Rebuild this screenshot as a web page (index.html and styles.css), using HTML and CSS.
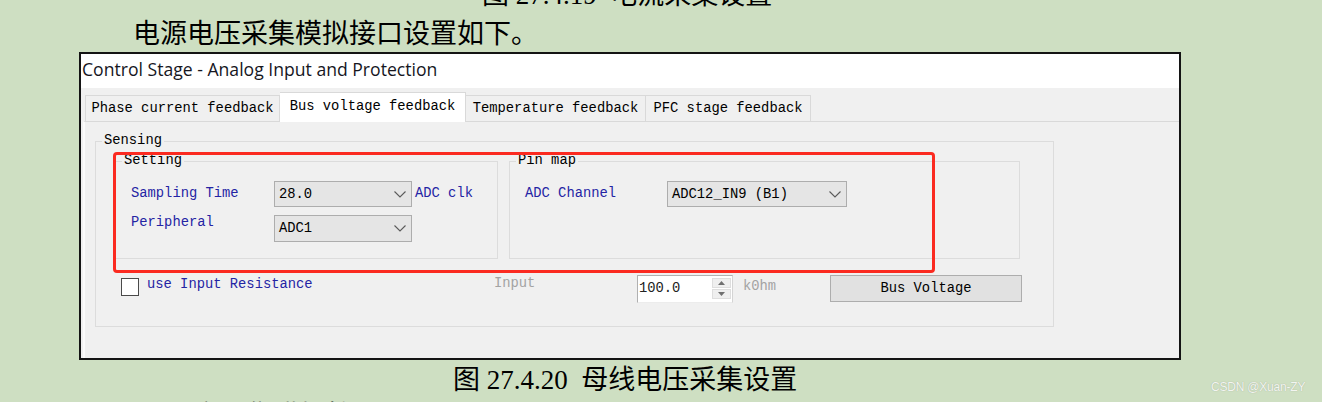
FILE: index.html
```html
<!DOCTYPE html>
<html lang="zh">
<head>
<meta charset="utf-8">
<title>Control Stage - Analog Input and Protection</title>
<link rel="stylesheet" href="styles.css">
</head>
<body>
<div class="prev"><div class="prev-text">图 27.4.19&nbsp;&nbsp;电流采集设置</div></div>
<p class="intro">电源电压采集模拟接口设置如下。</p>
<div class="window">
  <div class="titlebar">Control Stage - Analog Input and Protection</div>
  <div class="tabstrip">
    <div class="tab t-phase">Phase current feedback</div>
    <div class="tab t-bus active">Bus voltage feedback</div>
    <div class="tab t-temp">Temperature feedback</div>
    <div class="tab t-pfc">PFC stage feedback</div>
  </div>
  <div class="panel">
    <fieldset class="group sensing">
      <legend>Sensing</legend>
      <div class="group-row">
        <fieldset class="group setting">
          <legend>Setting</legend>
          <div class="form setting-form">
            <span class="lbl">Sampling Time</span>
            <div class="combo"><span>28.0</span><svg class="chev" width="12" height="7" viewBox="0 0 12 7"><polyline points="0.5,0.5 6,6 11.5,0.5"/></svg></div>
            <span class="lbl unit-blue">ADC clk</span>
            <span class="lbl lbl-top">Peripheral</span>
            <div class="combo"><span>ADC1</span><svg class="chev" width="12" height="7" viewBox="0 0 12 7"><polyline points="0.5,0.5 6,6 11.5,0.5"/></svg></div>
          </div>
        </fieldset>
        <fieldset class="group pinmap">
          <legend>Pin map</legend>
          <div class="form pin-form">
            <span class="lbl">ADC Channel</span>
            <div class="combo"><span>ADC12_IN9 (B1)</span><svg class="chev" width="12" height="7" viewBox="0 0 12 7"><polyline points="0.5,0.5 6,6 11.5,0.5"/></svg></div>
          </div>
        </fieldset>
      </div>
      <div class="opt-row">
        <div class="cb"></div>
        <span class="lbl cb-text">use Input Resistance</span>
        <span class="dim input-lbl">Input</span>
        <div class="spin">
          <span class="spin-val">100.0</span>
          <div class="spin-btns">
            <div class="spin-btn"><svg width="7" height="4" viewBox="0 0 7 4"><polygon points="0,4 3.5,0 7,4"/></svg></div>
            <div class="spin-btn"><svg width="7" height="4" viewBox="0 0 7 4"><polygon points="0,0 3.5,4 7,0"/></svg></div>
          </div>
        </div>
        <span class="dim unit">k0hm</span>
        <div class="btn">Bus Voltage</div>
      </div>
    </fieldset>
  </div>
  <div class="annotation"></div>
</div>
<div class="caption">图 27.4.20&nbsp;&nbsp;母线电压采集设置</div>
<div class="next">温度采集模拟接口设置</div>
<div class="watermark">CSDN @Xuan-ZY</div>
</body>
</html>
```
FILE: styles.css
```css
html, body {
  margin: 0;
  padding: 0;
}
body {
  background: #cedfc2;
  width: 1322px;
  height: 402px;
  overflow: hidden;
  position: relative;
  font-family: "Liberation Serif", "Noto Sans CJK SC", serif;
  color: #000;
}
.prev {
  height: 8px;
  overflow: hidden;
}
.prev-text {
  margin-top: -18px;
  padding-left: 482px;
  font-size: 27px;
  line-height: 27px;
}
.intro {
  margin: 0;
  height: 44px;
  box-sizing: border-box;
  padding: 8px 0 0 133px;
  font-size: 27px;
  line-height: 36px;
}
.window {
  position: relative;
  margin-left: 79px;
  width: 1102px;
  height: 308px;
  box-sizing: border-box;
  border: 2px solid #141414;
  background: #f0f0f0;
  display: flex;
  flex-direction: column;
}
.titlebar {
  height: 34px;
  background: #fff;
  padding-left: 1px;
  font-family: "Open Sans", "Liberation Sans", sans-serif;
  font-size: 17.6px;
  line-height: 30px;
  color: #16161e;
}
.tabstrip {
  height: 33px;
  display: flex;
  align-items: flex-end;
  padding-left: 4px;
  font-family: "Liberation Mono", monospace;
  font-size: 13.8px;
}
.tab {
  box-sizing: border-box;
  height: 26px;
  line-height: 25px;
  border: 1px solid #d9d9d9;
  border-bottom: 0;
  text-align: center;
  background: #f0f0f0;
  white-space: nowrap;
}
.t-phase { width: 195px; }
.t-bus { width: 186px; }
.t-temp { width: 180px; border-left: 0; }
.t-pfc { width: 165px; border-left: 0; }
.tab.active {
  position: relative;
  z-index: 2;
  height: 30px;
  line-height: 27px;
  margin-bottom: -1px;
  background: #fff;
  border-left: 0;
}
.panel {
  flex: 1;
  margin-left: 2px;
  border-top: 1px solid #d9d9d9;
  border-left: 2px solid #fbfbfb;
  font-family: "Liberation Mono", monospace;
  font-size: 13.8px;
}
.group {
  margin: 0;
  padding: 0;
  min-width: 0;
  border: 1px solid #dcdcdc;
}
.group > legend {
  margin-left: 6px;
  padding: 0 2px;
  line-height: 16px;
  color: #000;
}
.sensing {
  margin: 11px 0 0 10px;
  width: 959px;
  box-sizing: border-box;
  padding-bottom: 23px;
}
.group-row {
  display: flex;
  margin: 4px 0 0 19px;
  gap: 11px;
}
.setting {
  width: 383px;
  box-sizing: border-box;
}
.pinmap {
  width: 511px;
  box-sizing: border-box;
}
.form {
  display: grid;
  padding: 12px 0 16px 15px;
  row-gap: 8px;
}
.setting-form {
  grid-template-columns: 143px 138px auto;
  grid-template-rows: 26px 27px;
}
.pin-form {
  grid-template-columns: 142px 180px;
  grid-template-rows: 26px;
}
.lbl {
  color: #2424a4;
  line-height: 16px;
  align-self: center;
  white-space: nowrap;
}
.lbl.lbl-top {
  align-self: start;
  margin-top: 0;
}
.unit-blue {
  margin-left: 3px;
  align-self: center;
}
.combo {
  box-sizing: border-box;
  display: flex;
  align-items: center;
  justify-content: space-between;
  border: 1px solid #adadad;
  background: #e5e5e5;
  padding: 0 5px 0 4px;
  white-space: nowrap;
  color: #000;
}
.chev polyline {
  fill: none;
  stroke: #5a5a5a;
  stroke-width: 1.1;
}
.opt-row {
  display: flex;
  align-items: flex-start;
  margin-top: 16px;
  height: 28px;
}
.cb {
  box-sizing: border-box;
  width: 18px;
  height: 18px;
  margin: 3px 0 0 25px;
  border: 1.5px solid #4a4a4a;
  background: #fff;
}
.cb-text {
  margin: 2px 0 0 8px;
  width: 347px;
  line-height: 16px;
  align-self: flex-start;
}
.dim {
  color: #a3a3a3;
  line-height: 16px;
  white-space: nowrap;
}
.input-lbl {
  width: 143px;
  margin-top: 1px;
}
.spin {
  box-sizing: border-box;
  width: 96px;
  height: 28px;
  display: flex;
  background: #fff;
  border: 1px solid #b0b0b0;
  border-right-color: #d4d4d4;
  border-bottom-color: #ececec;
}
.spin-val {
  flex: 1;
  padding: 5px 0 0 1px;
  line-height: 16px;
  color: #222;
}
.spin-btns {
  width: 19px;
  margin: 2px 1px 3px 0;
  display: flex;
  flex-direction: column;
  gap: 1px;
}
.spin-btn {
  flex: 1;
  display: flex;
  align-items: center;
  justify-content: center;
  background: #efefef;
  border: 1px solid #dedede;
}
.spin-btn polygon {
  fill: #707070;
}
.unit {
  width: 87px;
  margin: 4px 0 0 10px;
}
.btn {
  box-sizing: border-box;
  width: 192px;
  height: 27px;
  line-height: 25px;
  text-align: center;
  background: #e1e1e1;
  border: 1px solid #adadad;
  color: #000;
}
.annotation {
  position: absolute;
  left: 32px;
  top: 98px;
  width: 822px;
  height: 121px;
  box-sizing: border-box;
  border: 3px solid #fb2a20;
  border-radius: 4px;
  pointer-events: none;
}
.caption {
  height: 40px;
  padding-left: 453px;
  font-size: 27px;
  line-height: 40px;
  white-space: nowrap;
}
.next {
  margin-top: 3px;
  padding-left: 165px;
  font-size: 27px;
  line-height: 27px;
  white-space: nowrap;
}
.watermark {
  position: absolute;
  left: 1211px;
  top: 380px;
  font-family: "Liberation Sans", sans-serif;
  font-size: 12px;
  line-height: 14px;
  letter-spacing: -0.2px;
  color: #f3f5f1;
  text-shadow: 0 0 1px rgba(120, 130, 110, 0.6);
}
```
